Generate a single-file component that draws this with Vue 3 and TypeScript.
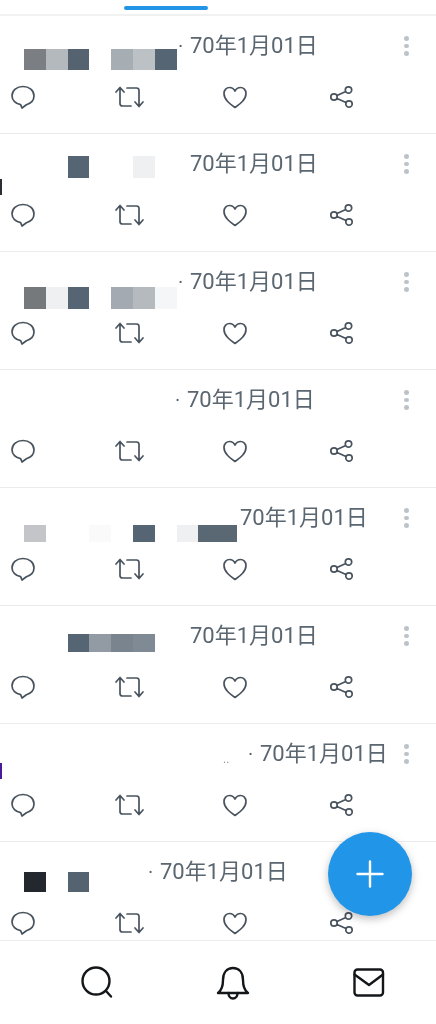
<script setup lang="ts">
interface Row {
  cells: string[];
  top: number;
  h: number;
  w: number;
  gap: number;
  dot?: boolean;
  trail?: string;
  edge?: { color: string; top: number };
}

const rows: Row[] = [
  { cells: ['#7b7f83', '#b4b9bd', '#54636f', '', '#a6adb3', '#bcc1c5', '#566573'], top: 33, h: 21, w: 154, gap: 12, dot: true },
  { cells: ['', '', '#566573', '', '', '#eef0f2'], top: 22, h: 22, w: 154, gap: 12, edge: { color: '#2b2f33', top: 45 } },
  { cells: ['#76797c', '#eef0f2', '#566573', '', '#a3aab1', '#b5babf', '#f5f6f8'], top: 35, h: 22, w: 154, gap: 12, dot: true },
  { cells: [], top: 30, h: 20, w: 151, gap: 12, dot: true },
  { cells: ['#c3c5c8', '', '', '#fafafa', '', '#566573', '', '#eef0f2', '#5a6874', '#5a6874'], top: 37, h: 17, w: 213, gap: 3 },
  { cells: ['', '', '#566573', '#929ba3', '#79848e', '#808a94'], top: 28, h: 18, w: 154, gap: 12 },
  { cells: [], top: 28, h: 20, w: 224, gap: 12, dot: true, trail: '..', edge: { color: '#4b1a96', top: 39 } },
  { cells: ['#22282e', '', '#54636f'], top: 30, h: 20, w: 124, gap: 12, dot: true }
];

const actions = [
  { name: 'reply', d: 'M12 1.500c6.200 0 11 4 11 9.300 0 4.400-3.400 7.700-7.600 9L11 23l-1.400-3.300C4.800 19 1 15.400 1 10.800 1 5.500 5.800 1.500 12 1.500z' },
  { name: 'retweet', d: 'M-1 7 3 2.500 7 7M3 3V18.500Q3 21 5.500 21H14M10 3H19.500Q22 3 22 5.500V21M18 17 22 21.500 26 17' },
  { name: 'like', d: 'M12 22.500C6.500 18.500 1 14.500 1 8.500 1 5 3.500 2.500 6.500 2.500 8.900 2.500 10.800 3.700 12 6 13.200 3.700 15.100 2.500 17.500 2.500 20.500 2.500 23 5 23 8.500 23 14.500 17.500 18.500 12 22.500z' },
  { name: 'share', d: 'M8 10.500 16.800 6.400M8 13.500 17 17.600M8.200 12a3.200 3.200 0 1 1-6.400 0 3.200 3.200 0 0 1 6.400 0zM22.700 5a3.200 3.200 0 1 1-6.400 0 3.200 3.200 0 0 1 6.400 0zM23.200 19a3.200 3.200 0 1 1-6.400 0 3.200 3.200 0 0 1 6.400 0z' }
];
</script>

<template>
  <div class="page">
    <div class="tabs"><span class="indicator"></span></div>

    <div class="feed">
      <article v-for="(row, i) in rows" :key="i" class="row">
        <span v-if="row.edge" class="edge" :style="{ background: row.edge.color, top: row.edge.top + 'px' }"></span>
        <div class="head">
          <div class="strip" :style="{ width: row.w + 'px', marginTop: row.top + 'px' }">
            <div class="cells">
              <span
                v-for="(c, j) in row.cells"
                :key="j"
                class="cell"
                :style="{ background: c || 'transparent', height: row.h + 'px' }"
              ></span>
            </div>
            <span v-if="row.trail" class="trail">{{ row.trail }}</span>
          </div>
          <span class="dot" :style="{ width: row.gap + 'px' }">{{ row.dot ? '·' : '' }}</span>
          <span class="date">70年1月01日</span>
          <span class="kebab"><i></i><i></i><i></i></span>
        </div>
        <div class="actions">
          <span v-for="a in actions" :key="a.name" class="action">
            <svg width="24" height="24" viewBox="0 0 24 24" fill="none" stroke="#48535e" stroke-width="1.700" stroke-linecap="round" stroke-linejoin="round">
              <path :d="a.d" />
            </svg>
          </span>
        </div>
      </article>
    </div>

    <nav class="bottom">
      <span class="nav-item">
        <svg width="36" height="36" viewBox="0 0 36 36" fill="none" stroke="#14171a" stroke-width="2.400" stroke-linecap="round" stroke-linejoin="round">
          <circle cx="17" cy="16" r="13.500" />
          <path d="M27 26 32 31.500" />
        </svg>
      </span>
      <span class="nav-item">
        <svg width="36" height="36" viewBox="0 0 36 36" fill="none" stroke="#14171a" stroke-width="2.400" stroke-linecap="round" stroke-linejoin="round">
          <path d="M3 28C7 25 8 21 8 15 8 7.500 12 3 18 3s10 4.500 10 12c0 6 1 10 5 13z" />
          <path d="M13.500 28c0 3.500 2 5.500 4.500 5.500s4.500-2 4.500-5.500" />
        </svg>
      </span>
      <span class="nav-item">
        <svg width="36" height="36" viewBox="0 0 36 36" fill="none" stroke="#14171a" stroke-width="2.400" stroke-linecap="round" stroke-linejoin="round">
          <rect x="3.500" y="4.500" width="28.500" height="26" rx="3" />
          <path d="M3.500 9.500 18 20 32 9.500" />
        </svg>
      </span>
    </nav>

    <button class="fab" type="button" aria-label="new">
      <svg width="28" height="28" viewBox="0 0 28 28" stroke="#fff" stroke-width="2.400" stroke-linecap="round">
        <path d="M14 1.500V26.500M1.500 14H26.500" />
      </svg>
    </button>
  </div>
</template>

<style>
html, body {
  margin: 0;
  background: #fff;
  overflow: hidden;
}
</style>

<style scoped>
.page {
  position: relative;
  display: flex;
  flex-direction: column;
  width: 436px;
  height: 1024px;
  overflow: hidden;
  background: #fff;
  font-family: Roboto, "Noto Sans CJK SC", sans-serif;
  filter: blur(0.35px);
}

.tabs {
  flex: none;
  height: 16px;
  padding-top: 6px;
  box-sizing: border-box;
  border-bottom: 2px solid #f1f1f1;
}

.indicator {
  display: block;
  width: 84px;
  height: 3.500px;
  margin-left: 124px;
  border-radius: 2px;
  background: #2196e8;
}

.feed {
  flex: 1;
  min-height: 0;
  overflow: hidden;
}

.row {
  position: relative;
  box-sizing: border-box;
  height: 118px;
  border-bottom: 1.500px solid #ececec;
}

.edge {
  position: absolute;
  left: 0;
  width: 2px;
  height: 16px;
}

.head {
  display: flex;
  align-items: flex-start;
  height: 69px;
  padding: 0 27px 0 24px;
  box-sizing: border-box;
}

.strip {
  position: relative;
  flex: none;
  min-height: 20px;
}

.cells {
  display: flex;
  overflow: hidden;
}

.cell {
  flex: 0 0 21.800px;
}

.trail {
  position: absolute;
  left: 199px;
  top: 0;
  font-size: 12px;
  line-height: 14px;
  color: #8b95a0;
}

.dot {
  flex: none;
  margin-top: 15px;
  font-size: 20px;
  line-height: 30px;
  color: #56636f;
  text-align: left;
}

.date {
  flex: none;
  margin-top: 15px;
  font-size: 22px;
  line-height: 30px;
  color: #5a6670;
  white-space: nowrap;
}

.kebab {
  display: flex;
  flex-direction: column;
  gap: 3px;
  margin-top: 20px;
  margin-left: auto;
}

.kebab i {
  display: block;
  width: 5px;
  height: 4.500px;
  border-radius: 50%;
  background: #bcc2c8;
}

.actions {
  display: flex;
  padding-left: 11px;
}

.action {
  flex: 0 0 106px;
  height: 24px;
}

.action svg {
  display: block;
  overflow: visible;
}

.bottom {
  flex: none;
  display: flex;
  height: 84px;
  padding-left: 29px;
  box-sizing: border-box;
  border-top: 1.500px solid #ededed;
  background: #fff;
  position: relative;
}

.nav-item {
  flex: 0 0 136px;
  display: flex;
  align-items: center;
  justify-content: center;
}

.fab {
  position: absolute;
  left: 328px;
  top: 832px;
  display: flex;
  align-items: center;
  justify-content: center;
  width: 84px;
  height: 84px;
  padding: 0;
  border: 0;
  border-radius: 50%;
  background: #2196e8;
  box-shadow: 0 3px 8px rgba(0, 0, 0, 0.26);
}
</style>
